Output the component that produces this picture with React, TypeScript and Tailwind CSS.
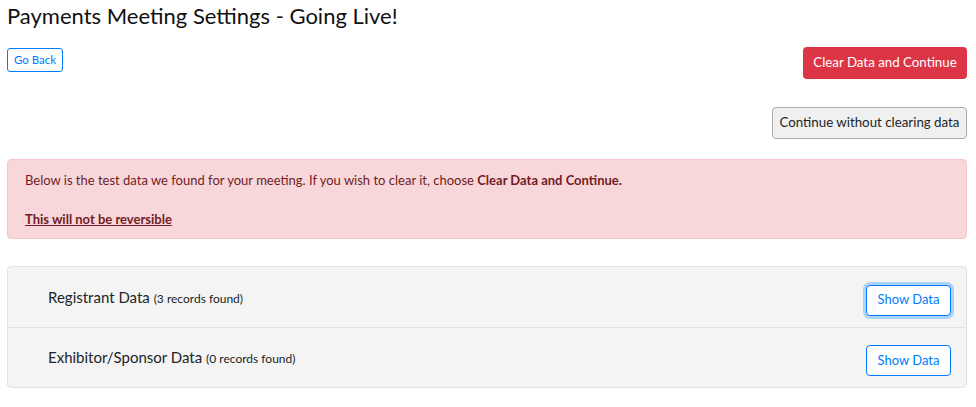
export default function App() {
  const rows = [
    { label: 'Registrant Data', count: 3, focused: true },
    { label: 'Exhibitor/Sponsor Data', count: 0, focused: false },
  ];

  return (
    <div className="w-[976px] h-[407px] bg-white pl-[7px] pr-[9px] text-[#212529]" style={{ fontFamily: 'Lato, "Open Sans", sans-serif' }}>
      <h1 className="pt-[1px] text-[22px] leading-[30px] font-normal text-[#111]">Payments Meeting Settings - Going Live!</h1>

      <div className="mt-[17px] flex items-start justify-between">
        <button className="h-[24px] w-[56px] rounded-[3px] border border-[#007bff] text-[11.5px] text-[#007bff] bg-white">Go Back</button>
        <button className="mt-[-1px] h-[32px] w-[164px] rounded-[4px] bg-[#dc3545] text-[13.3px] text-white">Clear Data and Continue</button>
      </div>

      <div className="mt-[28px] flex justify-end">
        <button className="h-[32px] w-[195px] rounded-[4px] border border-[#aaa] bg-[#f0f0f0] text-[13.3px] text-[#212529]">
          Continue without clearing data
        </button>
      </div>

      {/* Warning */}
      <div className="mt-[20px] h-[80px] rounded-[4px] border border-[#f5c6cb] bg-[#f8d7da] px-[17px] pt-[10px] text-[13px] text-[#721c24]">
        <p className="leading-[20px]">
          Below is the test data we found for your meeting. If you wish to clear it, choose <b>Clear Data and Continue.</b>
        </p>
        <p className="mt-[19px] leading-[20px] font-bold underline">This will not be reversible</p>
      </div>

      {/* Data list */}
      <div className="mt-[27px] rounded-[4px] border border-[#e2e2e2] bg-[#f4f4f4]">
        {rows.map((row, i) => (
          <div key={row.label} className={`flex h-[60px] items-center justify-between pl-[40px] pr-[15px] ${i > 0 ? 'border-t border-[#e2e2e2]' : ''}`}>
            <span className="text-[15px] text-[#212529]">
              {row.label} <span className="text-[12px]">({row.count} records found)</span>
            </span>
            <button
              className={`mt-[6px] h-[31px] w-[85px] rounded-[4px] border border-[#007bff] bg-white text-[13px] text-[#007bff] ${row.focused ? 'ring-[3px] ring-[#80bdff]/60' : ''}`}
            >
              Show Data
            </button>
          </div>
        ))}
      </div>
    </div>
  );
}
